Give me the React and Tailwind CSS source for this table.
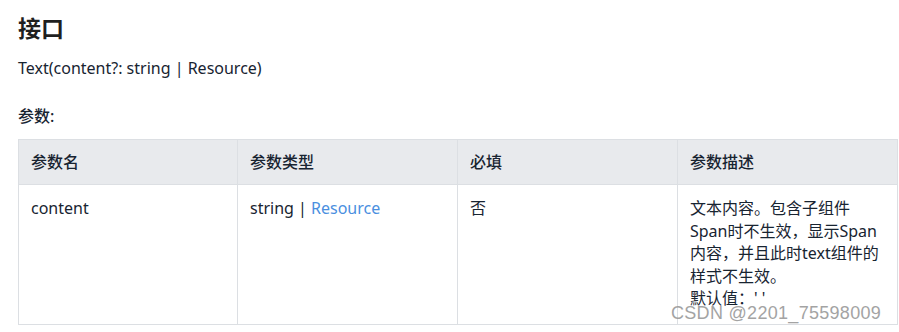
export default function App() {
  const font = { fontFamily: '"Noto Sans", "Noto Sans CJK SC", sans-serif' };
  return (
    <div className="relative w-[899px] h-[332px] bg-white overflow-hidden text-[#182431]" style={font}>
      <div className="pl-[18px] pr-[2px]">
        <h2 className="pt-[13px] text-[23px] leading-[30px] font-bold text-[#1f1f1f]">接口</h2>
        <p className="mt-[13px] text-[16px] leading-[24px]">Text(content?: string | Resource)</p>
        <p className="mt-[24px] text-[16px] leading-[24px] font-medium">参数:</p>
        <table className="mt-[11px] w-[879px] border-collapse table-fixed text-[16px]">
          <thead>
            <tr className="bg-[#e8eaed] h-[45px]">
              <th className="w-[219px] border border-[#dcdfe3] px-[12px] text-left font-medium">参数名</th>
              <th className="w-[220px] border border-[#dcdfe3] px-[12px] text-left font-medium">参数类型</th>
              <th className="w-[220px] border border-[#dcdfe3] px-[12px] text-left font-medium">必填</th>
              <th className="w-[220px] border border-[#dcdfe3] px-[12px] text-left font-medium">参数描述</th>
            </tr>
          </thead>
          <tbody>
            <tr className="align-top leading-[22.5px]">
              <td className="border border-[#dcdfe3] pl-[12px] pt-[12px]">content</td>
              <td className="border border-[#dcdfe3] pl-[12px] pt-[12px]">
                string | <span className="text-[#4a8fe0]">Resource</span>
              </td>
              <td className="border border-[#dcdfe3] pl-[12px] pt-[12px]">否</td>
              <td className="border border-[#dcdfe3] pl-[12px] pr-[14px] pt-[12px] pb-[14px]">
                文本内容。包含子组件Span时不生效，显示Span内容，并且此时text组件的样式不生效。
                <br />
                默认值：' '
              </td>
            </tr>
          </tbody>
        </table>
      </div>
      <div
        className="absolute left-[671px] top-[301px] text-[18px] leading-[24px] text-[#9a9a9a] opacity-90 tracking-[0.3px]"
        style={{ fontFamily: '"Liberation Sans", sans-serif' }}
      >
        CSDN @2201_75598009
      </div>
    </div>
  );
}
